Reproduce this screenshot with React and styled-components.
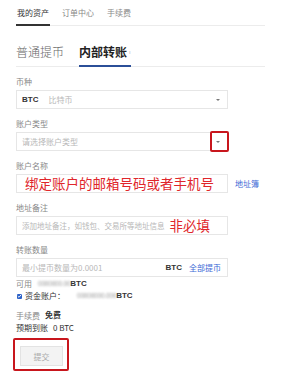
import React from 'react'
import styled, { createGlobalStyle } from 'styled-components'

const GlobalStyle = createGlobalStyle`
  html, body { margin: 0; padding: 0; background: #fff; }
  body {
    font-family: "Noto Sans CJK SC", "Liberation Sans", sans-serif;
    color: #333;
  }
`

function App() {
  return (
    <Page>
      <GlobalStyle />
      <TopTabs>
        <TopTab active>我的资产</TopTab>
        <TopTab>订单中心</TopTab>
        <TopTab>手续费</TopTab>
      </TopTabs>

      <SubTabs>
        <SubTab>普通提币</SubTab>
        <SubTab active>内部转账<Hint>ı</Hint></SubTab>
      </SubTabs>

      <Form>
        <Field>
          <Label>币种</Label>
          <Box>
            <Strong>BTC</Strong>
            <Placeholder style={{ marginLeft: 10 }}>比特币</Placeholder>
            <Caret />
          </Box>
        </Field>

        <Field>
          <Label>账户类型</Label>
          <Box>
            <Placeholder>请选择账户类型</Placeholder>
            <Caret />
            <Mark />
          </Box>
        </Field>

        <Field>
          <Label>账户名称</Label>
          <Row>
            <Box>
              <RedNote>绑定账户的邮箱号码或者手机号</RedNote>
            </Box>
            <Link>地址簿</Link>
          </Row>
        </Field>

        <Field>
          <Label>地址备注</Label>
          <Box>
            <Placeholder small>添加地址备注，如钱包、交易所等地址信息</Placeholder>
            <RedNote side>非必填</RedNote>
          </Box>
        </Field>

        <Field>
          <Label>转账数量</Label>
          <Box>
            <Placeholder>最小提币数量为0.0001</Placeholder>
            <Unit>BTC</Unit>
            <Link inline>全部提币</Link>
          </Box>
        </Field>
      </Form>

      <Info first>
        <Muted>可用</Muted>
        <Amount>
          <Blur>0000000.00</Blur>
          <Strong>BTC</Strong>
        </Amount>
      </Info>
      <Info>
        <Check>
          <svg width="6" height="6" viewBox="0 0 6 6">
            <path d="M1 3.2 L2.4 4.5 L5 1.5" stroke="#fff" strokeWidth="1.1" fill="none" />
          </svg>
        </Check>
        <span>资金账户：</span>
        <Amount wide>
          <Blur>00000000.000</Blur>
          <Strong>BTC</Strong>
        </Amount>
      </Info>

      <Info gap>
        <Muted>手续费</Muted>
        <Strong>免费</Strong>
      </Info>
      <Info>
        <span>预期到账</span>
        <span>0 BTC</span>
      </Info>

      <SubmitMark>
        <Submit>提交</Submit>
      </SubmitMark>
    </Page>
  )
}

export default App

const Page = styled.div`
  width: 300px;
  height: 385px;
  padding-left: 16px;
  box-sizing: border-box;
  overflow: hidden;
`
const TopTabs = styled.div`
  width: 249px;
  height: 26px;
  display: flex;
  align-items: flex-end;
  gap: 11px;
  border-bottom: 1px solid #ececec;
  box-sizing: border-box;
`
const TopTab = styled.div`
  font-size: 8px;
  line-height: 12px;
  padding: 0 1px 5px;
  color: ${p => (p.active ? '#333' : '#888')};
  border-bottom: 2px solid ${p => (p.active ? '#333' : 'transparent')};
  margin-bottom: -1px;
`
const SubTabs = styled.div`
  width: 249px;
  height: 41px;
  display: flex;
  align-items: flex-end;
  gap: 15px;
  border-bottom: 1px solid #ececec;
  box-sizing: border-box;
`
const SubTab = styled.div`
  font-size: 12px;
  line-height: 16px;
  padding-bottom: 5px;
  color: ${p => (p.active ? '#222' : '#666')};
  font-weight: ${p => (p.active ? 700 : 300)};
  border-bottom: 2px solid ${p => (p.active ? '#2b4f98' : 'transparent')};
  margin-bottom: -1px;
  display: flex;
  align-items: center;
`
const Hint = styled.span`
  font-size: 6px;
  color: #bbb;
  margin-left: 2px;
  font-weight: 400;
`
const Form = styled.div`
  display: flex;
  flex-direction: column;
  gap: 9px;
  padding-top: 9px;
`
const Field = styled.div`
  display: flex;
  flex-direction: column;
  gap: 2px;
`
const Label = styled.div`
  font-size: 8px;
  line-height: 12px;
  color: #888;
`
const Row = styled.div`
  display: flex;
  align-items: center;
  gap: 7px;
`
const Box = styled.div`
  position: relative;
  width: 212px;
  height: 19px;
  border: 1px solid #e6e6e6;
  box-sizing: border-box;
  display: flex;
  align-items: center;
  padding: 0 4px 0 5px;
  font-size: 8px;
  flex-shrink: 0;
  overflow: visible;
`
const Strong = styled.span`
  font-weight: 700;
  font-family: "Liberation Sans", "Noto Sans CJK SC", sans-serif;
  font-size: 8px;
  color: #333;
`
const Placeholder = styled.span`
  color: #b8b8b8;
  font-size: ${p => (p.small ? '7.5px' : '8px')};
  white-space: nowrap;
`
const Caret = styled.span`
  margin-left: auto;
  margin-right: 3px;
  width: 0;
  height: 0;
  border-left: 2px solid transparent;
  border-right: 2px solid transparent;
  border-top: 2px solid #777;
`
const Mark = styled.span`
  position: absolute;
  right: -2px;
  top: -2px;
  width: 19px;
  height: 21px;
  border: 2px solid #c8161d;
  border-radius: 2px;
  box-sizing: border-box;
`
const RedNote = styled.span`
  color: #e0262b;
  font-size: 13.5px;
  line-height: 17px;
  white-space: nowrap;
  background: #fff;
  margin-left: ${p => (p.side ? '5px' : '3px')};
`
const Link = styled.span`
  color: #3d6ad6;
  font-size: 8px;
  margin-left: ${p => (p.inline ? '7px' : '0')};
  margin-right: ${p => (p.inline ? '2px' : '0')};
`
const Unit = styled(Strong)`
  margin-left: auto;
`
const Info = styled.div`
  display: flex;
  align-items: center;
  gap: 5px;
  font-size: 8px;
  line-height: 12px;
  height: 12px;
  color: #333;
  margin-top: ${p => (p.gap ? '8px' : p.first ? '1px' : '0')};
`
const Muted = styled.span`
  color: #888;
`
const Amount = styled.span`
  display: inline-flex;
  align-items: center;
  margin-left: ${p => (p.wide ? '7px' : '1px')};
`
const Blur = styled.span`
  color: #999;
  filter: blur(0.9px);
  font-size: 6.5px;
  letter-spacing: -0.2px;
  font-family: "Liberation Sans", sans-serif;
`
const Check = styled.span`
  width: 5px;
  height: 5px;
  background: #2d62c8;
  border-radius: 1px;
  display: inline-flex;
  align-items: center;
  justify-content: center;
  margin-left: 1px;
  margin-right: -2px;
`
const SubmitMark = styled.div`
  margin-top: 4px;
  margin-left: -3px;
  width: 56px;
  height: 33px;
  border: 2px solid #c8161d;
  border-radius: 2px;
  box-sizing: border-box;
  padding: 6px 0 0 5px;
`
const Submit = styled.div`
  width: 43px;
  height: 20px;
  background: #f3f3f3;
  border: 1px solid #e3e3e3;
  box-sizing: border-box;
  color: #aaa;
  font-size: 8px;
  display: flex;
  align-items: center;
  justify-content: center;
`
